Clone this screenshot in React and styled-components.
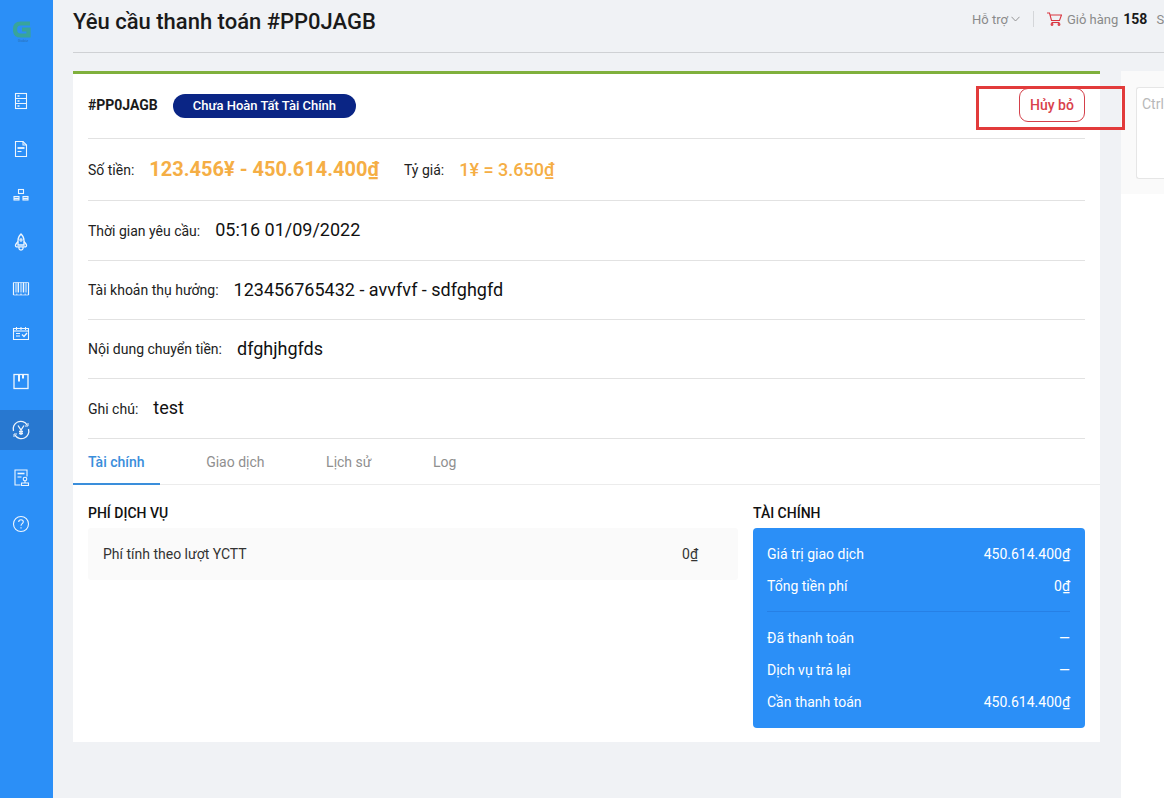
import React from "react";
import styled, { createGlobalStyle } from "styled-components";

const Global = createGlobalStyle`
  html, body { margin: 0; padding: 0; height: 100%; overflow: hidden; }
  body { font-family: Roboto, "Liberation Sans", sans-serif; background: #f0f2f5; color: #1a1a1a; }
  * { box-sizing: border-box; }
`;

const Page = styled.div`
  display: flex;
  width: 1164px;
  height: 798px;
  overflow: hidden;
  position: relative;
`;

const Sidebar = styled.nav`
  flex: 0 0 53px;
  background: #2b8ff7;
  display: flex;
  flex-direction: column;
`;

const LogoBox = styled.div`
  height: 81px;
  padding: 21px 0 0 13px;
  display: flex;
  flex-direction: column;
  align-items: flex-start;
`;

const LogoText = styled.span`
  font-size: 4px;
  line-height: 4px;
  color: #2a6fb8;
  margin: 1px 0 0 5px;
`;

const NavList = styled.div`
  display: flex;
  flex-direction: column;
  gap: 7px;
`;

const NavItem = styled.div`
  height: 40px;
  display: flex;
  align-items: center;
  padding-left: 9px;
  background: ${(p) => (p.$active ? "#2878d0" : "transparent")};
  color: #fff;
  svg { display: block; opacity: 0.92; }
`;

const Main = styled.div`
  flex: 1;
  min-width: 0;
  padding-left: 20px;
  display: flex;
  flex-direction: column;
`;

const Header = styled.header`
  height: 53px;
  flex: 0 0 53px;
  border-bottom: 1px solid #cfd1d4;
  display: flex;
  align-items: flex-start;
  justify-content: space-between;
`;

const Title = styled.h1`
  margin: 7px 0 0;
  font-size: 22px;
  line-height: 30px;
  font-weight: 500;
  color: #1a1a1a;
  white-space: nowrap;
`;

const HeaderRight = styled.div`
  width: 192px;
  flex: 0 0 192px;
  margin-top: 10px;
  height: 18px;
  overflow: hidden;
  display: flex;
  align-items: center;
  font-size: 13px;
  color: #8a8a8a;
  white-space: nowrap;
  svg { flex: none; }
`;

const Support = styled.span`
  display: inline-flex;
  align-items: center;
  gap: 3px;
`;

const VLine = styled.span`
  width: 1px;
  height: 16px;
  background: #d4d6d9;
  margin: 0 13px 0 13px;
  flex: none;
`;

const CartCount = styled.b`
  font-size: 14px;
  font-weight: 700;
  color: #1a1a1a;
  margin: 0 9px 0 5px;
`;

const CartLabel = styled.span`
  margin-left: 5px;
`;

const Body = styled.div`
  flex: 1;
  display: flex;
  padding-top: 18px;
  min-height: 0;
`;

const Card = styled.section`
  flex: 0 0 1027px;
  height: 671px;
  background: #fff;
  border-top: 3px solid #7fb03c;
  display: flex;
  flex-direction: column;
`;

const Rows = styled.div`
  padding: 0 15px;
`;

const Row = styled.div`
  height: ${(p) => p.$h}px;
  display: flex;
  align-items: center;
  border-bottom: 1px solid #e2e2e2;
`;

const TopRow = styled(Row)`
  justify-content: space-between;
`;

const Code = styled.span`
  font-size: 14px;
  font-weight: 700;
  margin-right: 15px;
`;

const Status = styled.span`
  display: inline-block;
  height: 24px;
  line-height: 24px;
  padding: 0 20px;
  border-radius: 12px;
  background: #0a2585;
  color: #fff;
  font-size: 13px;
  font-weight: 500;
`;

const CancelBtn = styled.button`
  width: 66px;
  height: 34px;
  border: 1px solid #d4404a;
  border-radius: 9px;
  background: #fff;
  color: #d9414b;
  font: 500 14px Roboto, sans-serif;
  padding: 0;
  margin-top: -2px;
`;

const Label = styled.span`
  font-size: 14px;
  color: #222;
  margin-right: ${(p) => p.$gap}px;
`;

const Value = styled.span`
  font-size: 18px;
  color: #111;
  margin-top: -2px;
`;

const Amount = styled.span`
  font-size: 20px;
  font-weight: 700;
  color: #f5ae45;
  margin: -2px 25px 0 0;
`;

const Rate = styled.span`
  font-size: 18px;
  font-weight: 500;
  color: #f5ae45;
`;

const Tabs = styled.div`
  height: 46px;
  flex: none;
  display: flex;
  gap: 31.6px;
  border-bottom: 1px solid #ececec;
`;

const Tab = styled.div`
  height: 46px;
  padding: 0 15px;
  display: flex;
  align-items: center;
  font-size: 14px;
  font-weight: ${(p) => (p.$active ? 500 : 400)};
  color: ${(p) => (p.$active ? "#3a8edb" : "#8f8f8f")};
  box-shadow: ${(p) => (p.$active ? "inset 0 -2px 0 #3a8edb" : "none")};
`;

const Content = styled.div`
  display: grid;
  grid-template-columns: 650px 332px;
  gap: 15px;
  padding: 0 15px;
`;

const SectionTitle = styled.h3`
  margin: 0;
  height: 43px;
  padding-top: 20px;
  font-size: 14px;
  line-height: 16px;
  font-weight: 500;
  color: #111;
`;

const FeeRow = styled.div`
  height: 52px;
  padding: 0 40px 0 15px;
  display: flex;
  align-items: center;
  justify-content: space-between;
  background: #fafafa;
  border-radius: 3px;
  font-size: 14px;
  color: #333;
`;

const FinanceBox = styled.div`
  background: #2b8ff7;
  border-radius: 4px;
  padding: 10px 15px 10px 14px;
  color: #fff;
`;

const FinanceRow = styled.div`
  height: 32px;
  display: flex;
  align-items: center;
  justify-content: space-between;
  font-size: 14px;
  font-weight: 400;
`;

const FinanceLine = styled.div`
  height: 1px;
  background: #2680e6;
  margin: 9px 0 10px;
`;

const SidePanel = styled.aside`
  flex: 1;
  margin-left: 21px;
  background: #fff;
  min-width: 0;
  margin-bottom: -40px;
`;

const NoteArea = styled.div`
  height: 123px;
  background: #fafafa;
  padding: 16px 0 15px 15px;
`;

const NoteInput = styled.div`
  height: 92px;
  background: #fff;
  border: 1px solid #e6e6e6;
  border-right: none;
  border-radius: 3px 0 0 3px;
  padding: 7px 5px;
  font-size: 14px;
  line-height: 18px;
  color: #b8b8b8;
  overflow: hidden;
  white-space: nowrap;
`;

const Annotation = styled.div`
  position: absolute;
  left: 976px;
  top: 86px;
  width: 149px;
  height: 44px;
  border: 3px solid #e23b3b;
  pointer-events: none;
`;

const S = { fill: "none", stroke: "currentColor", strokeWidth: 1.1 };
const Ic = ({ children, vb = "0 0 24 24" }) => (
  <svg width="24" height="24" viewBox={vb} {...S}>{children}</svg>
);

const icons = [
  <Ic>
    <rect x="6.5" y="4.5" width="11" height="15" />
    <path d="M6.5 9.5h11M6.5 14.5h11" />
    <path d="M8.5 7h2M8.5 12h2M8.5 17h2" strokeWidth="1.4" />
  </Ic>,
  <Ic vb="0 -1 24 24">
    <path d="M6.5 4.5h7.5l3.5 3.5v11.5h-11z" />
    <path d="M14 4.5v3.5h3.5" />
    <path d="M8.500 11h7" strokeWidth="1.800" />
    <path d="M8.500 14.500h4" />
  </Ic>,
  <Ic vb="0 2 24 24">
    <rect x="9.500" y="8.500" width="5" height="4" />
    <rect x="5" y="15.500" width="5" height="3.500" />
    <rect x="14" y="15.500" width="5" height="3.500" />
    <path d="M5 17.500h5M14 17.500h5" strokeWidth="1.400" />
  </Ic>,
  <Ic>
    <path d="M12 4c2.200 2 3 4 3 6.500V15H9v-4.500C9 8 9.800 6 12 4z" strokeWidth="1.300" />
    <path d="M9 11.500L6.700 14.500c-.4.600-.3 1.800.5 2.300H16.800c.8-.5.900-1.700.5-2.300L15 11.500" strokeWidth="1.300" />
    <path d="M10 17v1.500c0 .8 1 1.500 2 1.500s2-.7 2-1.500V17" strokeWidth="1.300" />
    <circle cx="12" cy="10" r="1.100" />
  </Ic>,
  <Ic vb="0 4 24 24">
    <path d="M4.500 9.500v12.500M19.500 9.500v12.500" strokeWidth="1.200" />
    <path d="M4.500 9.500h15M4.500 22h15" strokeWidth=".7" />
    <path d="M7 9.500v10" strokeWidth="1" />
    <path d="M9.300 9.500v10" strokeWidth="1.500" />
    <path d="M12 9.500v10" strokeWidth="1" />
    <path d="M14.500 9.500v10" strokeWidth="1.500" />
    <path d="M17 9.500v10" strokeWidth="1" />
    <path d="M7 21.200h1.500M11 21.200h2M15.500 21.200h1.500" strokeWidth=".8" />
  </Ic>,
  <Ic vb="0 3 24 24">
    <path d="M4.500 7.500h15v11h-15z" />
    <path d="M4.500 10h15" />
    <path d="M7.500 6v3M12 6v3M16.500 6v3" />
    <path d="M7 12.500h4M7 15h4" />
    <path d="M13 13.500l2 2 3-3.500" strokeWidth="1.300" />
  </Ic>,
  <Ic vb="0 1.500 24 24">
    <rect x="5" y="5" width="14" height="14" strokeWidth="1.300" />
    <path d="M10 5v7M14 5v4" strokeWidth="2" />
  </Ic>,
  <Ic>
    <path d="M4.500 13A7.500 7.500 0 0 1 18 6.800" strokeWidth="1.300" />
    <path d="M19.500 11A7.500 7.500 0 0 1 6 17.200" strokeWidth="1.300" />
    <path d="M19 5v3h-3M5 19v-3h3" strokeWidth="1" />
    <path d="M9 7.500l3 4.500 3-4.500M12 12v5M10 13.500h4M10 15.500h4" strokeWidth="1.300" />
  </Ic>,
  <Ic vb="0 -.5 24 24">
    <path d="M18 11V4.500H6v15h5.500" />
    <path d="M8.500 8h7" strokeWidth="1.600" />
    <path d="M8.500 11.500h4" />
    <circle cx="16" cy="13.500" r="1.800" />
    <path d="M16 15.500v1.500M12.500 17.500h7v2.500h-7z" />
  </Ic>,
  <Ic>
    <circle cx="12" cy="12" r="7.500" />
    <path d="M9.700 10c0-1.400 1-2.300 2.300-2.300s2.300.9 2.300 2.100c0 1.900-2.300 1.900-2.300 3.900" />
    <path d="M12 15.300v1.300" />
  </Ic>,
];

const Logo = () => (
  <svg width="18" height="17" viewBox="0 0 18 17">
    <path d="M17 2.500H7.500C3.500 2.500 2 5 2 8.500S3.500 14.500 7.500 14.500H15.500V8.500H9" fill="none" stroke="#3aa690" strokeWidth="4.200" opacity=".9" />
  </svg>
);

const Cart = () => (
  <svg width="15" height="14" viewBox="0 0 15 14" fill="none" stroke="#d9343f" strokeWidth="1.100">
    <path d="M0 1h2.500l2 7.500h8l2-5.500H3.300" />
    <path d="M4.500 10.500h8" />
    <circle cx="5" cy="12.500" r=".9" />
    <circle cx="12" cy="12.500" r=".9" />
  </svg>
);

const Chevron = () => (
  <svg width="9" height="6" viewBox="0 0 9 6" fill="none" stroke="#8a8a8a" strokeWidth=".9">
    <path d="M.5 .8L4.500 5l4-4.200" />
  </svg>
);

export default function App() {
  return (
    <Page>
      <Global />
      <Sidebar>
        <LogoBox>
          <Logo />
          <LogoText>Gobiz</LogoText>
        </LogoBox>
        <NavList>
          {icons.map((ic, i) => (
            <NavItem key={i} $active={i === 7}>{ic}</NavItem>
          ))}
        </NavList>
      </Sidebar>
      <Main>
        <Header>
          <Title>Yêu cầu thanh toán #PP0JAGB</Title>
          <HeaderRight>
            <Support>Hỗ trợ <Chevron /></Support>
            <VLine />
            <Cart />
            <CartLabel>Giỏ hàng</CartLabel>
            <CartCount>158</CartCount>
            <span>Số dư</span>
          </HeaderRight>
        </Header>
        <Body>
          <Card>
            <Rows>
              <TopRow $h={65}>
                <div>
                  <Code>#PP0JAGB</Code>
                  <Status>Chưa Hoàn Tất Tài Chính</Status>
                </div>
                <CancelBtn>Hủy bỏ</CancelBtn>
              </TopRow>
              <Row $h={62}>
                <Label $gap={15}>Số tiền:</Label>
                <Amount>123.456¥ - 450.614.400₫</Amount>
                <Label $gap={15}>Tỷ giá:</Label>
                <Rate>1¥ = 3.650₫</Rate>
              </Row>
              <Row $h={60}>
                <Label $gap={15}>Thời gian yêu cầu:</Label>
                <Value>05:16 01/09/2022</Value>
              </Row>
              <Row $h={59}>
                <Label $gap={15}>Tài khoản thụ hưởng:</Label>
                <Value>123456765432 - avvfvf - sdfghgfd</Value>
              </Row>
              <Row $h={59}>
                <Label $gap={15}>Nội dung chuyển tiền:</Label>
                <Value>dfghjhgfds</Value>
              </Row>
              <Row $h={60}>
                <Label $gap={15}>Ghi chú:</Label>
                <Value>test</Value>
              </Row>
            </Rows>
            <Tabs>
              <Tab $active>Tài chính</Tab>
              <Tab>Giao dịch</Tab>
              <Tab>Lịch sử</Tab>
              <Tab>Log</Tab>
            </Tabs>
            <Content>
              <div>
                <SectionTitle>PHÍ DỊCH VỤ</SectionTitle>
                <FeeRow>
                  <span>Phí tính theo lượt YCTT</span>
                  <span>0₫</span>
                </FeeRow>
              </div>
              <div>
                <SectionTitle>TÀI CHÍNH</SectionTitle>
                <FinanceBox>
                  <FinanceRow><span>Giá trị giao dịch</span><span>450.614.400₫</span></FinanceRow>
                  <FinanceRow><span>Tổng tiền phí</span><span>0₫</span></FinanceRow>
                  <FinanceLine />
                  <FinanceRow><span>Đã thanh toán</span><span>—</span></FinanceRow>
                  <FinanceRow><span>Dịch vụ trả lại</span><span>—</span></FinanceRow>
                  <FinanceRow><span>Cần thanh toán</span><span>450.614.400₫</span></FinanceRow>
                </FinanceBox>
              </div>
            </Content>
          </Card>
          <SidePanel>
            <NoteArea>
              <NoteInput>Ctrl + V để dán ảnh</NoteInput>
            </NoteArea>
          </SidePanel>
        </Body>
      </Main>
      <Annotation />
    </Page>
  );
}
